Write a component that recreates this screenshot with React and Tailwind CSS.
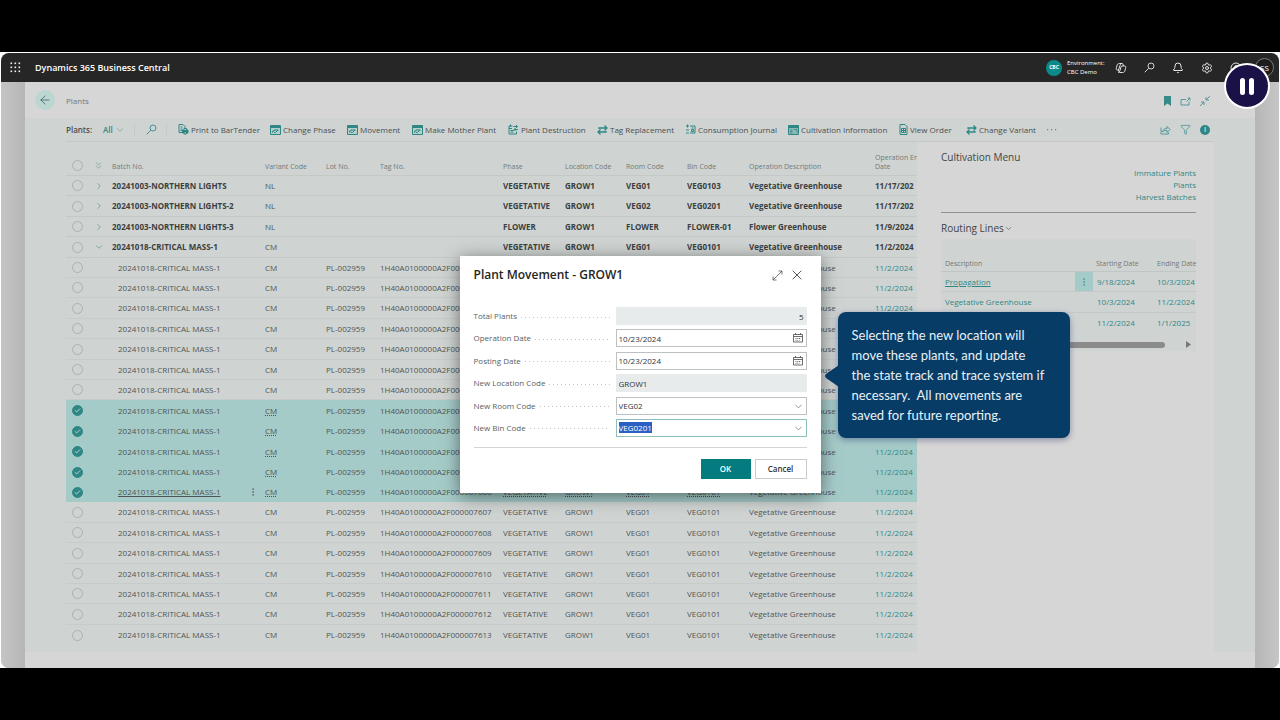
import { useEffect, useRef, useState } from "react";
import {
  ArrowLeft,
  Bell,
  Check,
  ChevronDown,
  ChevronRight,
  ChevronsDown,
  CircleHelp,
  EllipsisVertical,
  Filter,
  Settings,
  X,
} from "lucide-react";

const parents = [
  { id: "p1", batch: "20241003-NORTHERN LIGHTS", variant: "NL", phase: "VEGETATIVE", room: "VEG01", bin: "VEG0103", desc: "Vegetative Greenhouse", date: "11/17/202" },
  { id: "p2", batch: "20241003-NORTHERN LIGHTS-2", variant: "NL", phase: "VEGETATIVE", room: "VEG02", bin: "VEG0201", desc: "Vegetative Greenhouse", date: "11/17/202" },
  { id: "p3", batch: "20241003-NORTHERN LIGHTS-3", variant: "NL", phase: "FLOWER", room: "FLOWER", bin: "FLOWER-01", desc: "Flower Greenhouse", date: "11/9/2024" },
  { id: "p4", batch: "20241018-CRITICAL MASS-1", variant: "CM", phase: "VEGETATIVE", room: "VEG01", bin: "VEG0101", desc: "Vegetative Greenhouse", date: "11/2/2024", expanded: true },
];

const plants = Array.from({ length: 19 }, (_, i) => ({
  id: `c${i}`,
  tag: `1H40A0100000A2F00000${7595 + i}`,
}));

const routing = [
  { name: "Propagation", start: "9/18/2024", end: "10/3/2024", active: true },
  { name: "Vegetative Greenhouse", start: "10/3/2024", end: "11/2/2024" },
  { name: "Flower Greenhouse", start: "11/2/2024", end: "1/1/2025" },
];

function WindowIcon() {
  return (
    <svg viewBox="0 0 22 20" className="h-[10px] w-[11px] shrink-0">
      <path d="M1 1h20v18H1z" fill="#b4cfcc" stroke="#2f8784" strokeWidth="2" />
      <path d="M1 1h20v5H1z" fill="#2f8784" />
      <path d="M5 15v-3h3v-2h9M8 15h3l5-5" fill="none" stroke="#2f8784" strokeWidth="2" />
    </svg>
  );
}

function PrintIcon() {
  return (
    <svg viewBox="0 0 22 22" className="size-[11px] shrink-0" fill="none" stroke="#2f8784" strokeWidth="2">
      <path d="M9 17H2V1h8l4 4v4M5 6h4M5 10h4M5 13h3" />
      <path d="M9 12h11v6H9z" fill="#2f8784" />
      <path d="M12 12V9h5v3M12 16h5v4h-5z" fill="#cfd4d3" />
    </svg>
  );
}

function DestroyIcon() {
  return (
    <svg viewBox="0 0 22 22" className="size-[11px] shrink-0" fill="none" stroke="#2f8784" strokeWidth="2">
      <path d="M9 4H2v16h15v-5M2 9h6M5 13h6M5 16h6M5 1v5" />
      <path d="M11 5h8m-3-3 3 3-3 3M20 11h-8m3-3-3 3 3 3" />
    </svg>
  );
}

function SwapIcon() {
  return (
    <svg viewBox="0 0 22 20" className="h-[10px] w-[11px] shrink-0" fill="none" stroke="#2f8784" strokeWidth="2.6">
      <path d="M4 8V6h15m-4-5 5 5-5 5M18 12v2H3m4-5-5 5 5 5" />
    </svg>
  );
}

function JournalIcon() {
  return (
    <svg viewBox="0 0 22 22" className="size-[11px] shrink-0" fill="none" stroke="#2f8784" strokeWidth="2">
      <path d="M10 4h10v14H10M2 4h6M5 1v6M2 12h6M2 18h6M13 8h4M13 11v4h4v-4z" />
    </svg>
  );
}

function InfoWindowIcon() {
  return (
    <svg viewBox="0 0 22 20" className="h-[10px] w-[11px] shrink-0">
      <path d="M1 1h20v18H1z" fill="#8fb9b6" stroke="#2f8784" strokeWidth="2" />
      <path d="M1 1h20v5H1z" fill="#2f8784" />
      <path d="M4 10h5M4 13h5M4 16h5M12 9h6v7" fill="none" stroke="#2f8784" strokeWidth="1.5" />
    </svg>
  );
}

function OrderIcon() {
  return (
    <svg viewBox="0 0 18 22" className="h-[11px] w-[9px] shrink-0" fill="none" stroke="#2f8784" strokeWidth="2">
      <path d="M2 1h10l4 4v16H2zM5 9h8v8H5zM9 9v8M5 13h8" />
    </svg>
  );
}

function CopilotIcon() {
  return (
    <svg viewBox="0 0 24 24" className="size-3" fill="none" stroke="#e4e4e4" strokeWidth="2">
      <path d="M9 3h5c2 0 2 2 3 5h2c3 0 3 2 2 5l-1 4c-1 3-2 4-5 4h-5c-2 0-2-2-3-5H5c-3 0-3-2-2-5l1-4c1-3 2-4 5-4Z" />
      <path d="M14 3c-2 0-3 1-4 4l-3 9M17 8h-3c-1 0-2 1-2 2l-2 7c-1 3-2 4-4 4" />
    </svg>
  );
}

function SearchIcon() {
  return (
    <svg viewBox="0 0 22 22" className="size-[11px]" fill="none" stroke="currentColor" strokeWidth="1.8">
      <circle cx="14" cy="8" r="6" />
      <path d="M9.500 12.500 1.500 20.500" />
    </svg>
  );
}

function CalendarIcon() {
  return (
    <svg viewBox="0 0 20 20" className="absolute right-1 top-1 size-[10px]" fill="none" stroke="#5c5c5c" strokeWidth="1.8">
      <path d="M1 3h18v15H1zM1 7h18M5 0v4M15 0v4" />
      <path d="M5 11h11M5 14.500h8" strokeDasharray="2 1.500" />
    </svg>
  );
}

const actions = [
  { label: "Print to BarTender", icon: PrintIcon },
  { label: "Change Phase", icon: WindowIcon },
  { label: "Movement", icon: WindowIcon },
  { label: "Make Mother Plant", icon: WindowIcon },
  { label: "Plant Destruction", icon: DestroyIcon },
  { label: "Tag Replacement", icon: SwapIcon },
  { label: "Consumption Journal", icon: JournalIcon },
  { label: "Cultivation Information", icon: InfoWindowIcon },
  { label: "View Order", icon: OrderIcon },
  { label: "Change Variant", icon: SwapIcon },
];

function TopBar() {
  return (
    <header className="flex h-[29px] items-center bg-[#262626] pl-[9px] pr-[5px] text-white">
      <button aria-label="App launcher">
        <svg viewBox="0 0 11 11" className="size-[11px]" fill="#f0f0f0">
          {[1, 5, 9].map((y) =>
            [1, 5, 9].map((x) => <rect key={`${x}-${y}`} x={x - 0.5} y={y - 0.5} width="1.6" height="1.6" />)
          )}
        </svg>
      </button>
      <h1 className="ml-[14px] flex-1 text-[9px] font-semibold">Dynamics 365 Business Central</h1>
      <span className="grid size-4 place-items-center rounded-full bg-[#0b8a8a] text-[5px] font-bold">CBC</span>
      <p className="ml-[5px] w-12 text-[6px] leading-[9px]">
        Environment:
        <br />
        CBC Demo
      </p>
      <nav className="flex items-center gap-[17px] text-[#e4e4e4]">
        <button aria-label="Copilot"><CopilotIcon /></button>
        <button aria-label="Search"><SearchIcon /></button>
        <button aria-label="Notifications"><Bell className="size-3" strokeWidth={2} /></button>
        <button aria-label="Settings"><Settings className="size-3" strokeWidth={2} /></button>
        <button aria-label="Help"><CircleHelp className="size-3" strokeWidth={2} /></button>
      </nav>
      <button className="ml-[13px] size-[19px] rounded-full border border-[#777] bg-[#1c1c1c] text-[8px]">SS</button>
    </header>
  );
}

function PageHeader() {
  return (
    <div className="flex h-9 items-center pl-[10px] pr-[45px]">
      <button aria-label="Back" className="grid size-5 place-items-center rounded-full bg-[#bcd7d2] text-[#3d5c5a]">
        <ArrowLeft className="size-[14px]" strokeWidth={1.3} />
      </button>
      <h2 className="ml-[11px] flex-1 pt-[2px] text-[8px] text-[#747877]">Plants</h2>
      <div className="flex items-center gap-[9px] pt-[2px] text-[#37898a]">
        <button aria-label="Bookmark">
          <svg viewBox="0 0 7 10" className="h-[10px] w-[7px]" fill="currentColor"><path d="M0 0h7v10L3.500 7.500 0 10z" /></svg>
        </button>
        <button aria-label="Open in new window">
          <svg viewBox="0 0 22 18" className="h-[9px] w-[11px]" fill="none" stroke="currentColor" strokeWidth="1.6">
            <path d="M12 5H2v11h16V9M13 9l7-7m-5 0h5v5" />
          </svg>
        </button>
        <button aria-label="Collapse">
          <svg viewBox="0 0 20 20" className="size-[10px]" fill="none" stroke="currentColor" strokeWidth="1.6">
            <path d="M20 0l-8 8m0-6v6h6M0 20l8-8m-6 0h6v6" />
          </svg>
        </button>
      </div>
    </div>
  );
}

function Toolbar() {
  return (
    <div className="mr-[41px] flex h-6 items-center border-b border-[#c4c9c8] pr-[4px] text-[8px] text-[#4a4e4e]">
      <span className="w-[37px] font-semibold">Plants:</span>
      <button className="flex w-8 items-center gap-[2px] border-r border-[#c3c9c8] font-semibold text-[#2f8784]">
        All <ChevronDown className="size-[10px] text-[#5f8f8d]" strokeWidth={1.5} />
      </button>
      <button aria-label="Search plants" className="w-8 border-r border-[#c3c9c8] pl-[11px] text-[#37898a]">
        <SearchIcon />
      </button>
      <div className="ml-[11px] grid flex-1 grid-cols-[92px_77px_65px_96px_89px_88px_103px_111px_67px_80px_auto]">
        {actions.map(({ label, icon: Icon }) => (
          <button key={label} className="flex items-center gap-[2px] whitespace-nowrap">
            <Icon />
            {label}
          </button>
        ))}
        <button aria-label="More options" className="text-left text-[#5f8f8d]">
          <svg viewBox="0 0 10 2" className="ml-px h-[2px] w-[10px]" fill="currentColor">
            <path d="M0 0h1.2v1.2H0zM4 0h1.2v1.2H4zM8 0h1.2v1.2H8z" />
          </svg>
        </button>
      </div>
      <div className="flex items-center gap-[9px] text-[#37898a]">
        <button aria-label="Share">
          <svg viewBox="0 0 22 20" className="h-[10px] w-[11px]" fill="none" stroke="currentColor" strokeWidth="1.6">
            <path d="M2 5v13h15v-3M5 14c1-5 4-7 9-7V3l6 6-6 6v-4c-4 0-7 0-9 3Z" />
          </svg>
        </button>
        <button aria-label="Filter"><Filter className="size-[11px]" strokeWidth={1.5} /></button>
        <button aria-label="Details" className="grid size-[10px] place-items-center rounded-full bg-[#2f8784] text-[7px] font-bold leading-none text-[#cfd4d3]">
          i
        </button>
      </div>
    </div>
  );
}

function RowCheck({ label, checked, onChange }) {
  return (
    <label className="relative ml-[6px] block size-[11px]">
      <input
        type="checkbox"
        aria-label={label}
        checked={checked}
        onChange={onChange}
        className="block size-[11px] appearance-none rounded-full border border-[#acb1b0] checked:border-[#2f8784] checked:bg-[#2f8784]"
      />
      {checked && <Check className="pointer-events-none absolute inset-[2px] size-[7px] text-[#c9dedc]" strokeWidth={3} />}
    </label>
  );
}

function PlantTable() {
  const [selected, setSelected] = useState(["c7", "c8", "c9", "c10", "c11"]);
  const toggle = (id) =>
    setSelected(selected.includes(id) ? selected.filter((s) => s !== id) : [...selected, id]);

  return (
    <div className="min-w-0 flex-1 pb-[7px]">
      <table className="w-full table-fixed border-separate border-spacing-0 whitespace-nowrap text-left text-[8px] leading-[10px] text-[#4f5454] [&_td]:overflow-hidden">
        <colgroup>
          <col className="w-[22px]" />
          <col className="w-[24px]" />
          <col />
          <col className="w-[17px]" />
          <col className="w-[61px]" />
          <col className="w-[54px]" />
          <col className="w-[123px]" />
          <col className="w-[62px]" />
          <col className="w-[61px]" />
          <col className="w-[61px]" />
          <col className="w-[62px]" />
          <col className="w-[126px]" />
          <col className="w-[42px]" />
        </colgroup>
        <thead>
          <tr className="h-[34px] align-bottom text-[7px] leading-[9px] text-[#747978] [&>th]:overflow-hidden [&>th]:border-b [&>th]:border-[#c4c9c8] [&>th]:pb-[4px] [&>th]:font-normal">
            <th><RowCheck label="Select all" checked={false} onChange={() => setSelected([])} /></th>
            <th><ChevronsDown className="ml-[5px] size-[11px] text-[#6f9896]" strokeWidth={1.5} /></th>
            <th colSpan={2}>Batch No.</th>
            <th>Variant Code</th>
            <th>Lot No.</th>
            <th>Tag No.</th>
            <th>Phase</th>
            <th>Location Code</th>
            <th>Room Code</th>
            <th>Bin Code</th>
            <th>Operation Description</th>
            <th>Operation En<br />Date</th>
          </tr>
        </thead>
        <tbody className="[&>tr]:h-5 [&>tr:nth-child(5n+2)]:h-[21px] [&>tr:nth-child(5n+4)]:h-[21px]">
          {parents.map((p) => (
            <tr key={p.id} className="font-bold text-[#3c4040] [&>td]:border-b [&>td]:border-[#c4c9c8]">
              <td><RowCheck label={p.batch} checked={selected.includes(p.id)} onChange={() => toggle(p.id)} /></td>
              <td>
                <button aria-label="Expand" className="ml-[6px] block text-[#6f9896]">
                  {p.expanded ? <ChevronDown className="size-[10px]" strokeWidth={2} /> : <ChevronRight className="size-[10px]" strokeWidth={2} />}
                </button>
              </td>
              <td colSpan={2}>{p.batch}</td>
              <td className="font-normal text-[#4f5454]">{p.variant}</td>
              <td></td>
              <td></td>
              <td>{p.phase}</td>
              <td>GROW1</td>
              <td>{p.room}</td>
              <td>{p.bin}</td>
              <td>{p.desc}</td>
              <td>{p.date}</td>
            </tr>
          ))}
          {plants.map((p) => {
            const on = selected.includes(p.id);
            const current = p.id === "c11";
            const dotted = on ? "underline decoration-dotted underline-offset-1" : "";
            const full = current ? "underline decoration-dotted underline-offset-1" : "";
            return (
              <tr
                key={p.id}
                className={on ? "bg-[#a5cbc9]" : "[&>td]:border-b [&>td]:border-[#c7cccb] last:[&>td]:border-0"}
              >
                <td><RowCheck label={p.tag} checked={on} onChange={() => toggle(p.id)} /></td>
                <td></td>
                <td className="pl-[6px]">
                  {current ? <a href="#batch" className="underline underline-offset-1">20241018-CRITICAL MASS-1</a> : "20241018-CRITICAL MASS-1"}
                </td>
                <td>
                  {current && (
                    <button aria-label="Row menu" className="block"><EllipsisVertical className="size-[10px]" strokeWidth={1.5} /></button>
                  )}
                </td>
                <td className={dotted}>CM</td>
                <td>PL-002959</td>
                <td>{p.tag}</td>
                <td className={full}>VEGETATIVE</td>
                <td className={full}>GROW1</td>
                <td className={full}>VEG01</td>
                <td className={full}>VEG0101</td>
                <td>Vegetative Greenhouse</td>
                <td><a href="#date" className="text-[#2f8784]">11/2/2024</a></td>
              </tr>
            );
          })}
        </tbody>
      </table>
    </div>
  );
}

function FactBox() {
  return (
    <aside className="w-[297px] bg-[#d6d6d6] pl-6 pr-[18px] pt-2">
      <h3 className="text-[10px] font-medium leading-[14px] text-[#424545]">Cultivation Menu</h3>
      <ul className="mt-[3px] border-b border-[#8f9392] pb-[9px] text-right text-[8px] leading-3 text-[#2f8784]">
        <li><a href="#immature">Immature Plants</a></li>
        <li><a href="#plants">Plants</a></li>
        <li><a href="#harvest">Harvest Batches</a></li>
      </ul>
      <h3 className="mt-2 flex items-center text-[10px] font-medium leading-[14px] text-[#424545]">
        Routing Lines <ChevronDown className="size-[9px]" strokeWidth={1.5} />
      </h3>
      <div className="mt-1 bg-[#cfd4d3] pb-[3px]">
        <table className="w-full table-fixed border-separate border-spacing-0 whitespace-nowrap text-left text-[8px] leading-[10px] text-[#2f8784]">
          <colgroup>
            <col />
            <col className="w-[18px]" />
            <col className="w-[64px]" />
            <col className="w-[39px]" />
          </colgroup>
          <thead>
            <tr className="h-[33px] align-bottom text-[7px] leading-[9px] text-[#747978] [&>th]:border-b [&>th]:border-[#c0c6c5] [&>th]:pb-[3px] [&>th]:font-normal">
              <th colSpan={2} className="pl-1">Description</th>
              <th className="pl-[3px]">Starting Date</th>
              <th>Ending Date</th>
            </tr>
          </thead>
          <tbody className="[&>tr]:h-5 [&>tr:nth-child(2)]:h-[21px]">
            {routing.map((r) => (
              <tr key={r.name} className="[&>td]:border-b [&>td]:border-[#c4c9c8] last:[&>td]:border-0">
                <td className="pl-1">
                  <a href="#routing" className={r.active ? "underline underline-offset-1" : ""}>{r.name}</a>
                </td>
                <td className={r.active ? "bg-[#a5cbc9]" : ""}>
                  {r.active && (
                    <button aria-label="Line menu" className="mx-auto block"><EllipsisVertical className="size-[10px]" strokeWidth={1.5} /></button>
                  )}
                </td>
                <td className="pl-1">{r.start}</td>
                <td>{r.end}</td>
              </tr>
            ))}
          </tbody>
        </table>
        <div className="mt-2 flex h-[7px] items-center justify-between pr-[5px]">
          <div className="h-[6px] w-[224px] rounded-full bg-[#8b8b8b]"></div>
          <svg viewBox="0 0 5 7" className="h-[7px] w-[5px]" fill="#777"><path d="M0 0l5 3.500L0 7z" /></svg>
        </div>
      </div>
    </aside>
  );
}

function Field({ label, id, children }) {
  return (
    <div className="flex h-[18px] items-center">
      <div className="flex w-[142px] items-center gap-1 pr-[6px]">
        <label htmlFor={id} className="text-[#5c6161]">{label}</label>
        <span className="mt-[2px] h-px flex-1 bg-[repeating-linear-gradient(90deg,#c2c5c5_0_1px,transparent_1px_4px)]"></span>
      </div>
      <div className="relative h-full flex-1">{children}</div>
    </div>
  );
}

function MovementDialog() {
  const binRef = useRef(null);
  const [room, setRoom] = useState("VEG02");

  useEffect(() => {
    binRef.current.focus();
    binRef.current.select();
  }, []);

  return (
    <div role="dialog" aria-labelledby="dlg-title" className="w-[361px] bg-white px-[14px] pb-[14px] pt-[11px] text-[8px] text-[#333] shadow-[0_3px_16px_rgba(0,0,0,0.5)]">
      <div className="flex h-4 items-center">
        <h2 id="dlg-title" className="flex-1 text-[12px] font-semibold text-[#252525]">Plant Movement - GROW1</h2>
        <button aria-label="Expand">
          <svg viewBox="0 0 22 22" className="size-[11px]" fill="none" stroke="#555" strokeWidth="1.6">
            <path d="M2 20 20 2m-7 0h7v7M2 13v7h7" />
          </svg>
        </button>
        <button aria-label="Close" className="ml-[6px] mr-[2px]"><X className="size-4 text-[#555]" strokeWidth={1.5} /></button>
      </div>
      <form className="mt-6" onSubmit={(e) => e.preventDefault()}>
        <div className="flex h-[130px] flex-col justify-between">
          <Field label="Total Plants" id="total">
            <input id="total" readOnly value="5" className="h-full w-full bg-[#e8ebec] px-[3px] text-right" />
          </Field>
          <Field label="Operation Date" id="opdate">
            <input id="opdate" defaultValue="10/23/2024" className="h-full w-full border border-[#bcc1c1] px-[2px]" />
            <CalendarIcon />
          </Field>
          <Field label="Posting Date" id="postdate">
            <input id="postdate" defaultValue="10/23/2024" className="h-full w-full border border-[#bcc1c1] px-[2px]" />
            <CalendarIcon />
          </Field>
          <Field label="New Location Code" id="loc">
            <input id="loc" readOnly value="GROW1" className="h-full w-full bg-[#e8ebec] px-[3px]" />
          </Field>
          <Field label="New Room Code" id="room">
            <select id="room" value={room} onChange={(e) => setRoom(e.target.value)} className="h-full w-full appearance-none border border-[#bcc1c1] px-[2px]">
              <option>VEG01</option>
              <option>VEG02</option>
            </select>
            <ChevronDown className="pointer-events-none absolute right-[3px] top-[4px] size-[11px] text-[#666]" strokeWidth={1.5} />
          </Field>
          <Field label="New Bin Code" id="bin">
            <input
              id="bin"
              ref={binRef}
              role="combobox"
              aria-expanded="false"
              defaultValue="VEG0201"
              className="h-full w-full border border-[#8fbfbd] px-[2px] outline-none selection:bg-[#2b5fc4] selection:text-white"
            />
            <ChevronDown className="pointer-events-none absolute right-[3px] top-[4px] size-[11px] text-[#666]" strokeWidth={1.5} />
          </Field>
        </div>
        <div className="mt-[10px] flex justify-end gap-1 border-t border-[#d4d6d6] pt-[11px]">
          <button className="h-5 w-[50px] bg-[#047c7f] font-semibold text-white">OK</button>
          <button type="button" className="h-5 w-[52px] border border-[#c8cccc] font-semibold">Cancel</button>
        </div>
      </form>
    </div>
  );
}

function Callout() {
  return (
    <div className="absolute left-[378px] top-[56px] w-[232px] rounded-lg bg-[#073c66] py-[13px] pl-[14px] font-[Lato,sans-serif] text-[13px] leading-5 text-[#e8f1f8] shadow-[0_2px_6px_rgba(20,30,90,0.4)]">
      <svg viewBox="0 0 14 22" className="absolute -left-[13px] top-[53px] h-[22px] w-[14px]" fill="#073c66">
        <path d="M14 0v22L1 13Q-1 11 1 9z" />
      </svg>
      <p>
        Selecting the new location will
        <br />
        move these plants, and update
        <br />
        the state track and trace system if
        <br />
        necessary.&nbsp; All movements are
        <br />
        saved for future reporting.
      </p>
    </div>
  );
}

export default function App() {
  return (
    <div className="min-h-screen overflow-hidden bg-black py-[52px] font-['Open_Sans',sans-serif]">
      <div className="bg-white px-px pt-px">
        <div className="relative overflow-hidden rounded-lg bg-[#c2c2c2]">
          <TopBar />
          <div className="flex">
            <div className="w-6 shrink-0 bg-linear-to-r from-[#c4c4c4] to-[#b6b6b6]"></div>
            <main className="min-w-0 flex-1 bg-[#d6d6d6] pb-4">
              <PageHeader />
              <div className="bg-[#cfd4d3] pl-[41px]">
                <Toolbar />
                <div className="flex">
                  <PlantTable />
                  <FactBox />
                  <div className="w-[41px] shrink-0"></div>
                </div>
              </div>
            </main>
            <div className="w-6 shrink-0 bg-linear-to-r from-[#b6b6b6] to-[#c6c6c6]"></div>
          </div>

          {/* Dialog with its tour tip on top of the list */}
          <div className="absolute inset-0 flex items-start justify-center pt-[203px]">
            <div className="relative">
              <MovementDialog />
              <Callout />
            </div>
          </div>
          <button aria-label="Pause" className="absolute right-[9px] top-[10px] flex size-[46px] items-center justify-center gap-1 rounded-full border-2 border-white bg-[#1a1147]">
            <span className="h-[17px] w-[5px] rounded-full bg-white"></span>
            <span className="h-[17px] w-[5px] rounded-full bg-white"></span>
          </button>
        </div>
      </div>
    </div>
  );
}
